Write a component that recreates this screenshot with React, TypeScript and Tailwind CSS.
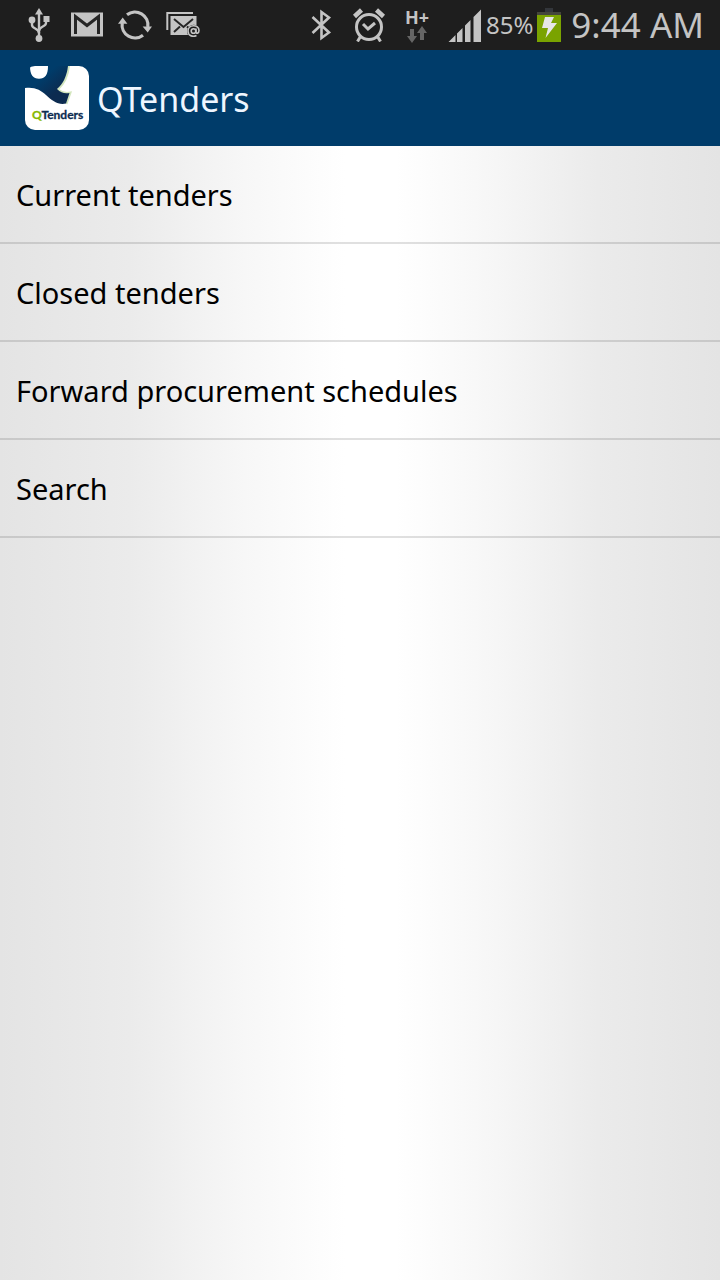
import React from 'react';

const menuItems = [
  { label: 'Current tenders', href: '#current' },
  { label: 'Closed tenders', href: '#closed' },
  { label: 'Forward procurement schedules', href: '#forward' },
  { label: 'Search', href: '#search' },
];

const iconClass = 'w-[34px] h-[34px] shrink-0';

const UsbIcon = () => (
  <svg className={iconClass} viewBox="0 0 34 34" fill="none" stroke="#c4c4c4" strokeWidth="2.4">
    <path d="M17 5v24" />
    <path d="M10 13v4c0 4 7 3 7 8M24 11v4c0 4-7 3-7 8" />
    <path d="M17 0l4 6.5h-8z" fill="#c4c4c4" stroke="none" />
    <circle cx="10" cy="12" r="3.4" fill="#c4c4c4" stroke="none" />
    <path d="M21.5 8h6v6h-6z" fill="#c4c4c4" stroke="none" />
    <circle cx="17" cy="30.5" r="3.4" fill="#c4c4c4" stroke="none" />
  </svg>
);

const GmailIcon = () => (
  <svg className={iconClass} viewBox="0 0 34 34">
    <path d="M1 4.5h32v24H1z" fill="#c4c4c4" />
    <path d="M5.5 26V8.5l11.500 9 11.500-9V26" fill="none" stroke="#262626" strokeWidth="3" />
  </svg>
);

const SyncIcon = () => (
  <svg className={iconClass} viewBox="0 0 34 34" fill="none" stroke="#c4c4c4" strokeWidth="3.2">
    <path d="M9 6.8A13 13 0 0 1 29.8 19" />
    <path d="M25 27.2A13 13 0 0 1 4.2 15" />
    <path d="M24.6 18.6h9.4l-4.3 6zM0 15.8h9.4L4.7 9.4z" fill="#c4c4c4" stroke="none" />
  </svg>
);

const MailIcon = () => (
  <svg className={iconClass} viewBox="0 0 34 34" fill="none">
    <path d="M1.3 22V5H27" stroke="#c4c4c4" strokeWidth="2" />
    <path d="M4.5 8h26v19h-26z" fill="#c4c4c4" />
    <path d="M8 11l9.5 8L27 11M8 24l6-5.500M27 24l-6-5.500" stroke="#262626" strokeWidth="2" />
    <circle cx="27.800" cy="23.500" r="6.800" fill="#1e1e1e" />
    <circle cx="27.500" cy="23" r="2.300" stroke="#c4c4c4" strokeWidth="1.600" />
    <path d="M30 20.500v3.500c0 2 3 1.500 3-1.500 0-6.500-11-6.500-11 .5 0 5.500 5.500 6 8.500 4.500" stroke="#c4c4c4" strokeWidth="1.600" />
  </svg>
);

const BluetoothIcon = () => (
  <svg className={iconClass} viewBox="0 0 34 34" fill="none" stroke="#c4c4c4" strokeWidth="2.6">
    <path d="M8.500 9l16.500 15.500L17.500 30V4L25 9.500 8.500 25" />
  </svg>
);

const AlarmIcon = () => (
  <svg className={iconClass} viewBox="0 0 34 34" fill="none" stroke="#c4c4c4">
    <circle cx="17" cy="19" r="12.500" strokeWidth="3" />
    <path d="M11 16l5 5 7-6" strokeWidth="3" />
    <path d="M2.500 8.500l7-6.500M31.500 8.500l-7-6.500" strokeWidth="4.500" />
    <path d="M8.500 28.500l-3 5M25.500 28.500l3 5" strokeWidth="3" />
  </svg>
);

const SignalIcon = () => (
  <svg className={iconClass} viewBox="0 0 34 34" fill="#c4c4c4">
    <path d="M0 34.500l7.500-7.500v7.500zM9 25.500l5.500-5.500v14.500H9zM17 17.500l5.500-5.500v22.500H17zM25.500 9l7.500-7.500v33h-7.500z" />
  </svg>
);

const BatteryIcon = () => (
  <svg className="w-6 h-[34px] shrink-0" viewBox="0 0 24 34">
    <path d="M8 0h8v4H8z" fill="#33363b" />
    <path d="M0 4h24v3H0z" fill="#44463c" />
    <path d="M0 7h24v27H0z" fill="#7aa300" />
    <path d="M8 9h9l-3 6h6L8.500 30l2.500-10H5z" fill="#e6e6e6" />
  </svg>
);

const AppLogo = () => (
  <svg className="w-16 h-16 shrink-0" viewBox="0 0 64 64" aria-hidden="true">
    <defs>
      <linearGradient id="swoosh" x1="0" y1="0" x2="1" y2="1">
        <stop offset="0.35" stopColor="#003c6a" />
        <stop offset="0.7" stopColor="#0c2b50" />
      </linearGradient>
    </defs>
    <rect width="64" height="64" rx="10" fill="#ffffff" />
    <path d="M44 0C43 10 39 18 33 23.500C37 27 41 27.500 45.500 26.500L41.500 38" fill="none" stroke="#d3e6bd" strokeWidth="2" />
    <path d="M0 0H5C5 9 8 12.700 14 12.700C20 12.700 23 9 23 0H43C42 10 38 18 32 23C36 27 40 28 44.500 27L41 37.500C34 39.500 27 35 21 29C16 24 9 20.500 0 22Z" fill="url(#swoosh)" />
    <text x="7" y="53" fontFamily="Lato, sans-serif" fontSize="12" fontWeight="700" fill="#0c2b50" stroke="#0c2b50" strokeWidth="0.3">
      <tspan fill="#86b800" stroke="#86b800">Q</tspan>Tenders
    </text>
  </svg>
);

const StatusBar: React.FC = () => (
  <div className="h-[50px] bg-[#1e1e1e] text-[#c4c4c4] pl-[22px] pr-4 flex items-center justify-between">
    <div className="flex items-center gap-[14px]">
      <UsbIcon />
      <GmailIcon />
      <SyncIcon />
      <MailIcon />
    </div>

    <div className="flex items-center">
      <div className="flex items-center gap-[14px]">
        <BluetoothIcon />
        <AlarmIcon />
        {/* Mobile data type with up/down traffic arrows */}
        <div className="w-[34px] flex flex-col items-center">
          <span className="text-[18px] leading-[18px] font-bold">H+</span>
          <svg className="w-5 h-[17px]" viewBox="0 0 20 17" fill="#666666">
            <path d="M3 3h4v7h3l-5 7-5-7h3zM13 14h4V7h3l-5-7-5 7h3z" />
          </svg>
        </div>
        <SignalIcon />
      </div>
      <span className="ml-1 text-2xl leading-8">85%</span>
      <span className="ml-1 mr-[10px] flex">
        <BatteryIcon />
      </span>
      <span className="text-[35px] leading-[48px]">9:44 AM</span>
    </div>
  </div>
);

const App: React.FC = () => {
  return (
    <div className="min-h-screen flex flex-col font-['Noto_Sans',sans-serif] bg-[linear-gradient(to_right,#e4e4e4,#ebebeb_18%,#f7f7f7_34%,#fff_48%,#fff_55%,#f6f6f6_69%,#ebebeb_83%,#e4e4e4)]">
      <StatusBar />

      <header className="h-24 bg-[#003c6a] pl-[25px] pr-4 flex items-center gap-2">
        <AppLogo />
        <h1 className="pt-0.5 text-[34px] leading-[48px] text-[#eef6ff]">QTenders</h1>
      </header>

      <nav>
        <ul>
          {menuItems.map((item) => (
            <li key={item.href} className="border-b-2 border-black/12">
              <a href={item.href} className="h-24 px-4 pt-0.5 flex items-center text-[29px] leading-10 text-black">
                {item.label}
              </a>
            </li>
          ))}
        </ul>
      </nav>
    </div>
  );
};

export default App;
